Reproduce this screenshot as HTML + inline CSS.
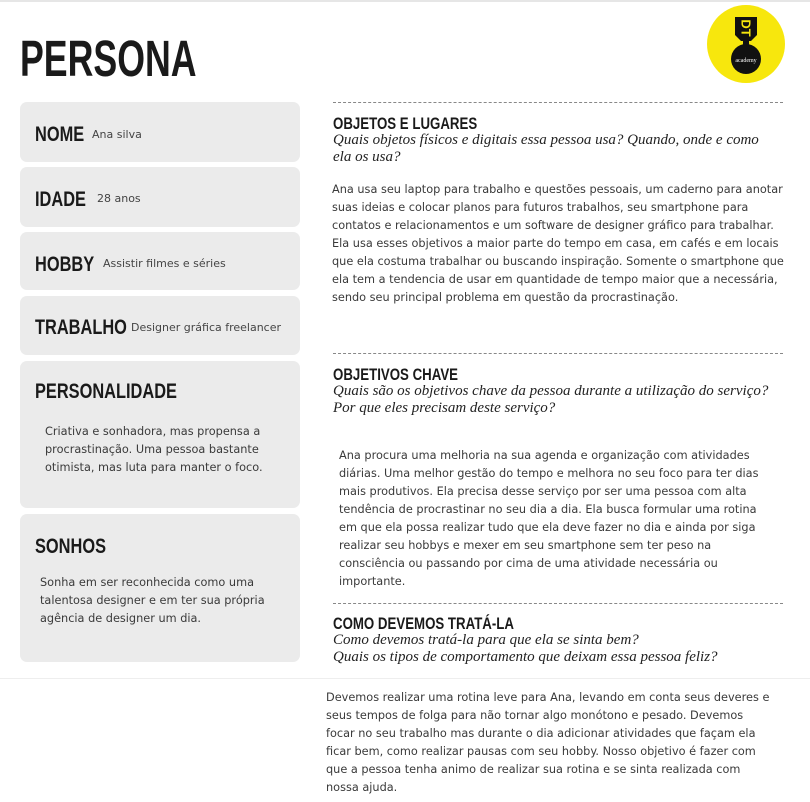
<!DOCTYPE html>
<html><head><meta charset="utf-8"><style>
*{margin:0;padding:0;box-sizing:border-box}
body{width:810px;height:802px;background:#fff;position:relative;overflow:hidden;font-family:"DejaVu Sans","Liberation Sans",sans-serif;color:#333}
.a{position:absolute;white-space:nowrap}
.h{font-family:"Liberation Sans Narrow","Liberation Sans",sans-serif;font-weight:bold;color:#1a1a1a;display:inline-block;transform-origin:left top;transform:scaleX(.78)}
.box{position:absolute;left:20px;width:280px;background:#ebebeb;border-radius:7px}
.t{font-size:11.3px;line-height:18px;color:#3a3a3a}
.s{font-size:11px;color:#444}
.q{font-family:"Liberation Serif","DejaVu Serif",serif;font-style:italic;font-size:15px;line-height:17px;color:#222}
.dash{position:absolute;left:333px;width:450px;border-top:1px dashed #888}
</style></head><body>
<div style="position:absolute;left:0;top:0;width:810px;height:2px;background:#e6e6e6"></div>
<div class="a" style="left:20px;top:29px"><span class="h" style="font-size:51px;transform:scaleX(.7)">PERSONA</span></div>

<svg style="position:absolute;left:706px;top:5px" width="80" height="80" viewBox="0 0 80 80">
<circle cx="40" cy="39" r="39" fill="#f7e70d"/>
<path d="M29 12 H51 V30 L45 36 H35 L29 30 Z" fill="#111"/>
<g transform="translate(40 23) rotate(90)">
<text x="0" y="4.5" font-family="Liberation Sans" font-weight="bold" font-size="13" fill="#f7e70d" text-anchor="middle">DT</text>
</g>
<ellipse cx="40" cy="54" rx="15" ry="15" fill="#111"/>
<rect x="37" y="35" width="6" height="6" fill="#111"/>
<text x="40" y="57" font-family="Liberation Serif" font-size="6" fill="#fff" text-anchor="middle">academy</text>
</svg>

<div class="box" style="top:102px;height:60px"></div>
<div class="a" style="left:35px;top:123px"><span class="h" style="font-size:21px">NOME</span></div>
<div class="a s" style="left:92px;top:128px">Ana silva</div>

<div class="box" style="top:167px;height:60px"></div>
<div class="a" style="left:35px;top:188px"><span class="h" style="font-size:21px">IDADE</span></div>
<div class="a s" style="left:97px;top:192px">28 anos</div>

<div class="box" style="top:232px;height:58px"></div>
<div class="a" style="left:35px;top:253px"><span class="h" style="font-size:21px">HOBBY</span></div>
<div class="a s" style="left:103px;top:257px">Assistir filmes e séries</div>

<div class="box" style="top:296px;height:59px"></div>
<div class="a" style="left:35px;top:316px"><span class="h" style="font-size:21px">TRABALHO</span></div>
<div class="a s" style="left:131px;top:321px">Designer gráfica freelancer</div>

<div class="box" style="top:361px;height:147px"></div>
<div class="a" style="left:35px;top:380px"><span class="h" style="font-size:21px">PERSONALIDADE</span></div>
<div class="a t" style="left:45px;top:423px">Criativa e sonhadora, mas propensa a<br>procrastinação. Uma pessoa bastante<br>otimista, mas luta para manter o foco.</div>

<div class="box" style="top:514px;height:148px"></div>
<div class="a" style="left:35px;top:535px"><span class="h" style="font-size:21px">SONHOS</span></div>
<div class="a t" style="left:40px;top:574px">Sonha em ser reconhecida como uma<br>talentosa designer e em ter sua própria<br>agência de designer um dia.</div>

<div class="dash" style="top:102px"></div>
<div class="a" style="left:333px;top:114px"><span class="h" style="font-size:17px">OBJETOS E LUGARES</span></div>
<div class="a q" style="left:333px;top:132px">Quais objetos físicos e digitais essa pessoa usa? Quando, onde e como<br>ela os usa?</div>
<div class="a t" style="left:332px;top:181px">Ana usa seu laptop para trabalho e questões pessoais, um caderno para anotar<br>suas ideias e colocar planos para futuros trabalhos, seu smartphone para<br>contatos e relacionamentos e um software de designer gráfico para trabalhar.<br>Ela usa esses objetivos a maior parte do tempo em casa, em cafés e em locais<br>que ela costuma trabalhar ou buscando inspiração. Somente o smartphone que<br>ela tem a tendencia de usar em quantidade de tempo maior que a necessária,<br>sendo seu principal problema em questão da procrastinação.</div>

<div class="dash" style="top:353px"></div>
<div class="a" style="left:333px;top:365px"><span class="h" style="font-size:17px">OBJETIVOS CHAVE</span></div>
<div class="a q" style="left:333px;top:383px">Quais são os objetivos chave da pessoa durante a utilização do serviço?<br>Por que eles precisam deste serviço?</div>
<div class="a t" style="left:339px;top:447px">Ana procura uma melhoria na sua agenda e organização com atividades<br>diárias. Uma melhor gestão do tempo e melhora no seu foco para ter dias<br>mais produtivos. Ela precisa desse serviço por ser uma pessoa com alta<br>tendência de procrastinar no seu dia a dia. Ela busca formular uma rotina<br>em que ela possa realizar tudo que ela deve fazer no dia e ainda por siga<br>realizar seu hobbys e mexer em seu smartphone sem ter peso na<br>consciência ou passando por cima de uma atividade necessária ou<br>importante.</div>

<div class="dash" style="top:603px"></div>
<div class="a" style="left:333px;top:614px"><span class="h" style="font-size:17px">COMO DEVEMOS TRATÁ-LA</span></div>
<div class="a q" style="left:333px;top:632px">Como devemos tratá-la para que ela se sinta bem?<br>Quais os tipos de comportamento que deixam essa pessoa feliz?</div>
<div style="position:absolute;left:0;top:678px;width:810px;height:1px;background:#eee"></div>
<div class="a t" style="left:326px;top:689px">Devemos realizar uma rotina leve para Ana, levando em conta seus deveres e<br>seus tempos de folga para não tornar algo monótono e pesado. Devemos<br>focar no seu trabalho mas durante o dia adicionar atividades que façam ela<br>ficar bem, como realizar pausas com seu hobby. Nosso objetivo é fazer com<br>que a pessoa tenha animo de realizar sua rotina e se sinta realizada com<br>nossa ajuda.</div>
</body></html>
